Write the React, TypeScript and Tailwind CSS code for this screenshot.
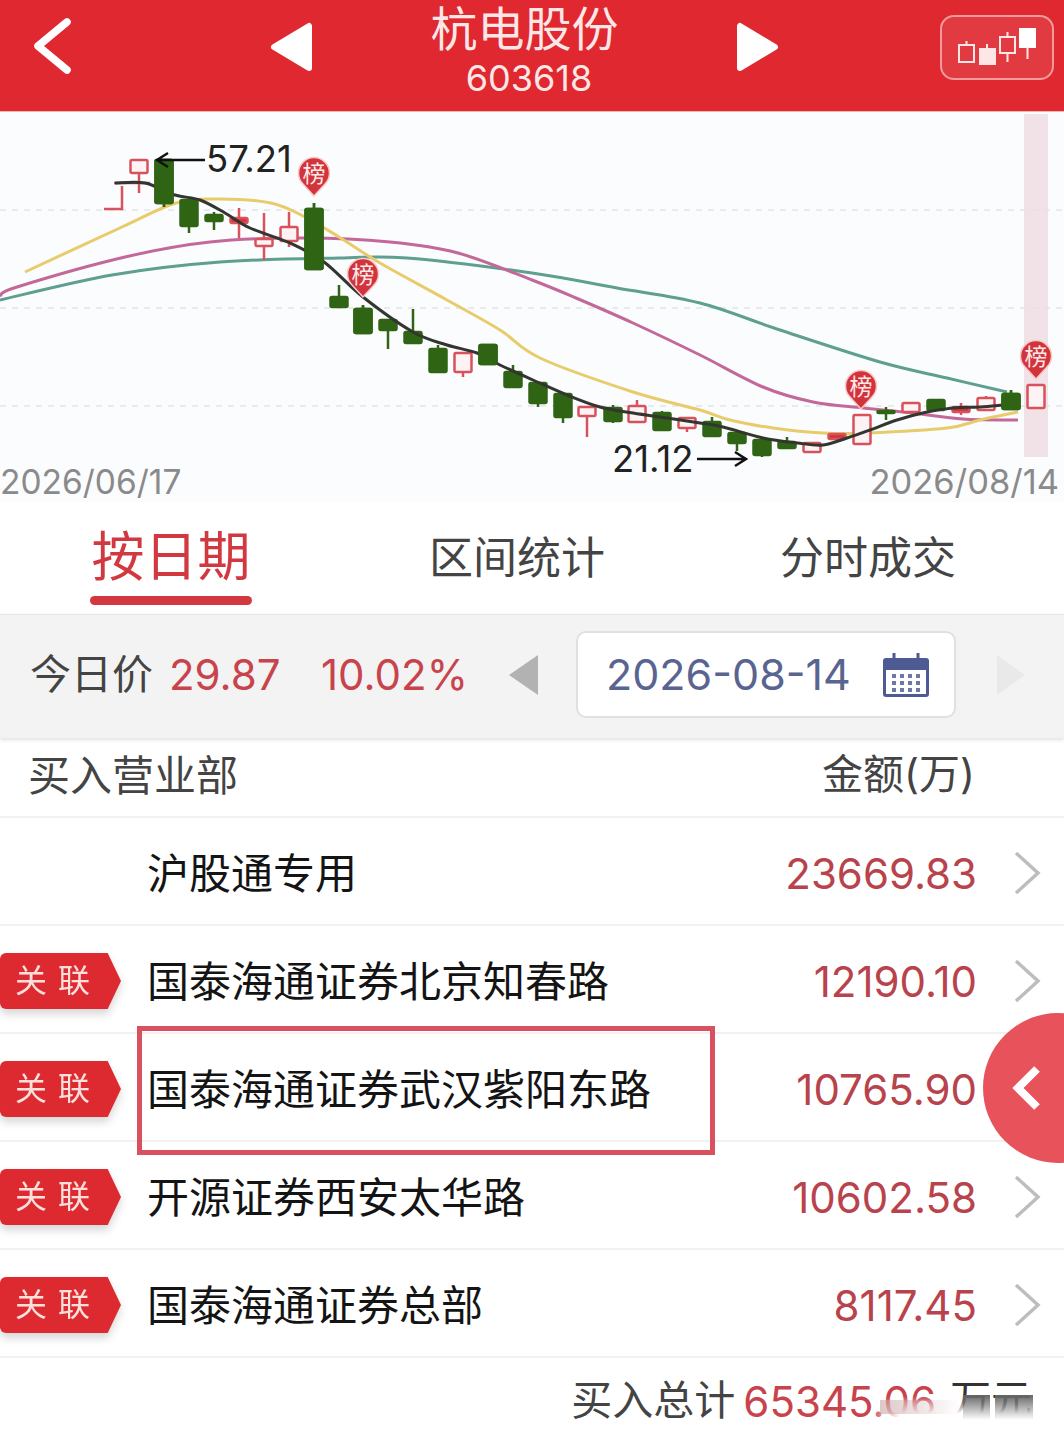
// Stock detail page: 龙虎榜 candlestick chart and buyer table
type Candle = {
  x: number;
  top: number;
  bottom: number;
  high?: number;
  low?: number;
  up?: boolean;
  solid?: boolean;
};

const candles: Candle[] = [
  { x: 139, top: 160, bottom: 173, low: 193, up: true },
  { x: 164, top: 160, bottom: 203, low: 207 },
  { x: 189, top: 200, bottom: 226, low: 233 },
  { x: 214, top: 215, bottom: 221, high: 212, low: 230 },
  { x: 239, top: 218, bottom: 223, high: 208, low: 238, up: true, solid: true },
  { x: 264, top: 239, bottom: 246, high: 213, low: 260, up: true },
  { x: 289, top: 227, bottom: 241, high: 212, low: 247, up: true },
  { x: 314, top: 209, bottom: 269, high: 203 },
  { x: 339, top: 297, bottom: 307, high: 285 },
  { x: 363, top: 309, bottom: 333, high: 305 },
  { x: 388, top: 320, bottom: 330, low: 349 },
  { x: 413, top: 332, bottom: 343, high: 309 },
  { x: 438, top: 349, bottom: 372, high: 345 },
  { x: 463, top: 353, bottom: 372, low: 377, up: true },
  { x: 488, top: 345, bottom: 364 },
  { x: 513, top: 372, bottom: 387, high: 365, low: 388 },
  { x: 538, top: 383, bottom: 403, low: 407 },
  { x: 563, top: 394, bottom: 417, low: 423 },
  { x: 587, top: 407, bottom: 416, low: 437, up: true },
  { x: 613, top: 408, bottom: 421, high: 405, low: 423 },
  { x: 637, top: 406, bottom: 422, high: 400, up: true },
  { x: 662, top: 413, bottom: 430, high: 411 },
  { x: 687, top: 418, bottom: 428, low: 432, up: true },
  { x: 712, top: 422, bottom: 436, high: 417, low: 437 },
  { x: 737, top: 433, bottom: 443, low: 451 },
  { x: 762, top: 440, bottom: 455, high: 437, low: 457 },
  { x: 787, top: 442, bottom: 448, high: 437 },
  { x: 812, top: 443, bottom: 452, up: true },
  { x: 837, top: 434, bottom: 439, up: true, solid: true },
  { x: 862, top: 415, bottom: 444, up: true },
  { x: 886, top: 411, bottom: 413, high: 407, low: 420 },
  { x: 911, top: 403, bottom: 412, up: true },
  { x: 936, top: 400, bottom: 410 },
  { x: 961, top: 407, bottom: 412, high: 403, low: 415, up: true, solid: true },
  { x: 986, top: 398, bottom: 410, high: 396, up: true },
  { x: 1011, top: 394, bottom: 409, high: 390 },
  { x: 1036, top: 385, bottom: 408, up: true },
];

const ma5 = [[115, 183], [145, 183], [175, 195], [200, 200], [225, 213], [250, 228], [290, 243], [324, 262], [363, 297], [413, 332], [447, 345], [477, 353], [500, 365], [533, 380], [567, 395], [600, 407], [633, 413], [667, 418], [700, 423], [723, 427], [763, 438], [797, 443], [823, 445], [847, 438], [870, 430], [897, 420], [927, 412], [953, 408], [980, 407], [1002, 405]];
const ma10 = [[25, 272], [122, 227], [176, 203], [220, 199], [271, 203], [305, 217], [339, 237], [380, 263], [447, 300], [500, 330], [540, 358], [633, 392], [700, 410], [730, 420], [773, 428], [823, 433], [867, 433], [947, 428], [980, 420], [1018, 412]];
const ma20 = [[0, 296], [17, 287], [125, 257], [210, 242], [305, 238], [390, 242], [458, 253], [532, 280], [576, 298], [633, 323], [700, 355], [763, 387], [813, 402], [863, 408], [913, 413], [963, 419], [1018, 420]];
const ma30 = [[0, 300], [112, 275], [220, 262], [339, 258], [407, 258], [532, 273], [617, 288], [700, 303], [780, 330], [880, 362], [947, 378], [1007, 392]];

const rows = [
  { name: '沪股通专用', amount: '23669.83', linked: false },
  { name: '国泰海通证券北京知春路', amount: '12190.10', linked: true },
  { name: '国泰海通证券武汉紫阳东路', amount: '10765.90', linked: true },
  { name: '开源证券西安太华路', amount: '10602.58', linked: true },
  { name: '国泰海通证券总部', amount: '8117.45', linked: true },
];

// catmull-rom through the sampled points
function smooth(points: number[][]) {
  let d = `M${points[0][0]} ${points[0][1]}`;
  for (let i = 0; i < points.length - 1; i++) {
    const p0 = points[i - 1] || points[i];
    const p1 = points[i];
    const p2 = points[i + 1];
    const p3 = points[i + 2] || p2;
    const c1x = p1[0] + (p2[0] - p0[0]) / 6;
    const c1y = p1[1] + (p2[1] - p0[1]) / 6;
    const c2x = p2[0] - (p3[0] - p1[0]) / 6;
    const c2y = p2[1] - (p3[1] - p1[1]) / 6;
    d += ` C${c1x} ${c1y} ${c2x} ${c2y} ${p2[0]} ${p2[1]}`;
  }
  return d;
}

function Pin({ x, y }: { x: number; y: number }) {
  return (
    <g>
      <path
        d={`M${x} ${y + 22} L${x - 11} ${y + 10} A15.5 15.5 0 1 1 ${x + 11} ${y + 10} Z`}
        fill="#d2343c"
        stroke="#f7c9cc"
        strokeWidth="1.5"
      />
      <text x={x} y={y + 8} textAnchor="middle" fontSize="23" fill="#fde8e8">榜</text>
    </g>
  );
}

function CandleMark({ c }: { c: Candle }) {
  const color = c.up ? '#d8525c' : '#2f6414';
  const fill = c.up ? (c.solid ? '#d8303a' : '#fdf3f4') : '#2f6414';
  return (
    <g>
      <line x1={c.x} x2={c.x} y1={c.high ?? c.top} y2={c.low ?? c.bottom} stroke={color} strokeWidth="2.5" />
      <rect
        x={c.x - 8.5}
        y={c.top}
        width="17"
        height={c.bottom - c.top}
        rx="1.5"
        fill={fill}
        stroke={color}
        strokeWidth="2.5"
      />
    </g>
  );
}

function Chart() {
  return (
    <svg viewBox="0 112 1064 390" className="block w-[1064px] h-[390px] bg-[#fbfcfe]">
      <rect x="1024" y="114" width="24" height="343" fill="#f1e2e7" />
      {[210, 308, 406].map((y) => (
        <line key={y} x1="0" x2="1064" y1={y} y2={y} stroke="#e2e3e6" strokeWidth="1.5" strokeDasharray="6 6" />
      ))}
      <path d={smooth(ma30)} fill="none" stroke="#5f9f90" strokeWidth="3" />
      <path d={smooth(ma20)} fill="none" stroke="#c2699a" strokeWidth="3" />
      <path d={smooth(ma10)} fill="none" stroke="#e8cc6c" strokeWidth="3" />
      <path d="M104 209 H122 V186 M114 183 H150" fill="none" stroke="#d8525c" strokeWidth="2.5" />
      {candles.map((c) => (
        <CandleMark key={c.x} c={c} />
      ))}
      <path d={smooth(ma5)} fill="none" stroke="#33352f" strokeWidth="3" />
      {candles.filter((c) => [164, 314, 363, 488, 1011].includes(c.x)).map((c) => (
        <CandleMark key={c.x} c={c} />
      ))}

      <Pin x={314} y={174} />
      <Pin x={363} y={275} />
      <Pin x={861} y={387} />
      <Pin x={1036} y={357} />

      <path d="M205 160 H158 M168 153 L157 160 L168 167" fill="none" stroke="#111" strokeWidth="2.5" />
      <text x="206" y="172" fontSize="36.5" fill="#222">57.21</text>
      <text x="612" y="472" fontSize="36.5" fill="#222">21.12</text>
      <path d="M697 459 H745 M735 452 L746 459 L735 466" fill="none" stroke="#111" strokeWidth="2.5" />
      <text x="0" y="494" fontSize="33.5" fill="#8a8a8a">2026/06/17</text>
      <text x="1059" y="494" fontSize="34.5" fill="#8a8a8a" textAnchor="end">2026/08/14</text>
    </svg>
  );
}

function Header() {
  return (
    <div className="flex items-center h-[112px] pl-[33px] pr-[10px] bg-[#df2830] border-b border-[#f3b4b6]">
      <svg viewBox="0 0 38 56" className="w-[38px] h-[56px] -mt-[20px]">
        <path d="M34 4 L5 28 L34 52" fill="none" stroke="#fff" strokeWidth="7.5" strokeLinecap="round" strokeLinejoin="round" />
      </svg>
      <svg viewBox="0 0 42 50" className="w-[42px] h-[50px] ml-[199px] -mt-[18px]">
        <path d="M39 4 V46 L4 25 Z" fill="#fff" stroke="#fff" strokeWidth="6" strokeLinejoin="round" />
      </svg>
      <div className="flex-1 flex flex-col items-center -mt-[9px] text-[#fde7e6]">
        <div className="text-[47px] leading-[54px]">杭电股份</div>
        <div className="text-[36px] leading-[44px] pl-[9px]">603618</div>
      </div>
      <svg viewBox="0 0 42 50" className="w-[42px] h-[50px] -mt-[18px]">
        <path d="M3 4 V46 L38 25 Z" fill="#fff" stroke="#fff" strokeWidth="6" strokeLinejoin="round" />
      </svg>
      <div className="ml-[161px] -mt-[17px] w-[114px] h-[65px] rounded-[14px] border-2 border-[#f29a9c] bg-[#e23a41] flex items-center justify-center">
        <svg viewBox="0 0 80 40" className="w-[80px] h-[40px]">
          <g fill="none" stroke="#fde7e6" strokeWidth="2">
            <rect x="2" y="18" width="15" height="17" />
            <path d="M9.5 14 V18" />
            <path d="M30 17 V22" />
            <rect x="23" y="22" width="15" height="15" fill="#fde7e6" />
            <rect x="43" y="10" width="15" height="16" />
            <path d="M50.5 5 V10 M50.5 26 V35" />
            <rect x="63" y="2" width="15" height="18" fill="#fff" stroke="#fff" />
            <path d="M70.5 20 V32" />
          </g>
        </svg>
      </div>
    </div>
  );
}

function Tabs() {
  return (
    <div className="flex h-[112px] bg-white text-[#444]">
      <div className="w-[342px] flex flex-col items-center pt-[25px]">
        <div className="text-[53px] leading-[60px] text-[#d2383f]">按日期</div>
        <div className="mt-[9px] w-[162px] h-[9px] rounded-full bg-[#d2383f]"></div>
      </div>
      <div className="w-[350px] flex justify-center pt-[29px] text-[44px] leading-[54px]">区间统计</div>
      <div className="w-[352px] flex justify-center pt-[29px] text-[44px] leading-[54px]">分时成交</div>
    </div>
  );
}

function DateBar() {
  return (
    <div className="flex items-center h-[124px] pl-[30px] pb-[4px] bg-[#f3f3f3] border-t border-[#e6e6e6] shadow-[0_2px_4px_rgba(0,0,0,0.12)] relative">
      <span className="text-[41px] text-[#444] w-[139px]">今日价</span>
      <span className="text-[42px] text-[#c8434c] w-[152px]">29.87</span>
      <span className="text-[42px] text-[#c8434c] w-[186px]">10.02%</span>
      <svg viewBox="0 0 32 42" className="w-[32px] h-[42px]">
        <path d="M31 1 V41 L2 21 Z" fill="#b2b2b2" />
      </svg>
      <div className="ml-[37px] w-[380px] h-[87px] pl-[28px] pr-[24px] flex items-center justify-between bg-white rounded-[10px] border-2 border-[#e0e0e0]">
        <span className="text-[43px] text-[#5a6490]">2026-08-14</span>
        <svg viewBox="0 0 48 46" className="w-[48px] h-[46px]">
          <rect x="1" y="6" width="46" height="39" rx="3" fill="#4e5a94" />
          <rect x="4" y="18" width="40" height="24" fill="#fff" />
          <path d="M12 1 V12 M36 1 V12" stroke="#4e5a94" strokeWidth="3" />
          <g fill="#6d77a8">
            {[22, 29, 36].map((y) =>
              [10, 18, 26, 34].map((x) => <rect key={`${x}-${y}`} x={x} y={y} width="4" height="4" />)
            )}
          </g>
        </svg>
      </div>
      <svg viewBox="0 0 30 42" className="w-[30px] h-[42px] ml-[40px]">
        <path d="M1 1 V41 L29 21 Z" fill="#e9e9e9" />
      </svg>
    </div>
  );
}

function LinkedBadge() {
  return (
    <div className="drop-shadow-[0_5px_4px_rgba(0,0,0,0.16)]">
      <div className="w-[121px] h-[56px] pl-[15px] flex items-center gap-[11px] bg-[#dc2a30] text-[32px] text-[#fde0dc] [clip-path:polygon(0_0,89%_0,100%_50%,89%_100%,0_100%)] rounded-l-[6px]">
        <span>关</span>
        <span>联</span>
      </div>
    </div>
  );
}

function Row({ name, amount, linked }: { name: string; amount: string; linked: boolean }) {
  return (
    <div className="flex items-center h-[108px] pt-[4px] border-b-2 border-[#f1f1f1]">
      <div className="w-[148px] shrink-0">{linked && <LinkedBadge />}</div>
      <div className="flex-1 -ml-[1px] text-[42px] text-[#141414]">{name}</div>
      <div className="text-[42px] text-[#b8434c]">{amount}</div>
      <svg viewBox="0 0 28 44" className="w-[28px] h-[44px] ml-[36px] mr-[23px]">
        <path d="M3 2 L25 22 L3 42" fill="none" stroke="#bdbdbd" strokeWidth="3.5" />
      </svg>
    </div>
  );
}

export default function App() {
  return (
    <div className="relative w-[1064px] h-[1440px] overflow-hidden bg-white font-['Inter','Noto_Sans_CJK_SC',sans-serif]">
      <Header />
      <Chart />
      <Tabs />
      <DateBar />

      <div className="flex items-center justify-between h-[80px] pl-[28px] pr-[89px] pb-[4px] border-b-2 border-[#f1f1f1] text-[#444]">
        <span className="text-[42px]">买入营业部</span>
        <span className="text-[41px]">金额(万)</span>
      </div>

      {rows.map((row) => (
        <Row key={row.name} {...row} />
      ))}

      <div className="flex items-center justify-end h-[84px] pr-[32px] pt-[2px]">
        <span className="text-[41px] text-[#444] mr-[8px]">买入总计</span>
        <span className="text-[42px] text-[#c8434c] mr-[14px]">65345.06</span>
        <span className="text-[41px] text-[#333]">万元</span>
      </div>

      {/* highlight box drawn over the table */}
      <div className="absolute left-[137px] top-[1026px] w-[578px] h-[129px] border-[5px] border-[#d9505f]"></div>

      {/* floating drawer handle */}
      <div className="absolute left-[983px] top-[1013px] w-[150px] h-[150px] rounded-full bg-[#e8525a] pl-[29px] flex items-center">
        <svg viewBox="0 0 30 46" className="w-[30px] h-[46px]">
          <path d="M25 4 L6 23 L25 42" fill="none" stroke="#fff" strokeWidth="8" />
        </svg>
      </div>

      {/* watermark fading the end of the total */}
      <div className="absolute left-[870px] top-[1396px] w-[194px] h-[44px] bg-gradient-to-b from-white/0 to-white to-40% [mask-image:linear-gradient(to_right,transparent,black_30px)]"></div>
      <div className="absolute left-[880px] top-[1400px] w-[80px] h-[14px] bg-gradient-to-r from-[#c9a3a3]/60 to-white/0"></div>
      <div className="absolute left-[963px] top-[1395px] w-[27px] h-[25px] bg-gradient-to-b from-[#666] to-white/0"></div>
      <div className="absolute left-[995px] top-[1395px] w-[38px] h-[25px] bg-gradient-to-b from-[#666] to-white/0"></div>
    </div>
  );
}
